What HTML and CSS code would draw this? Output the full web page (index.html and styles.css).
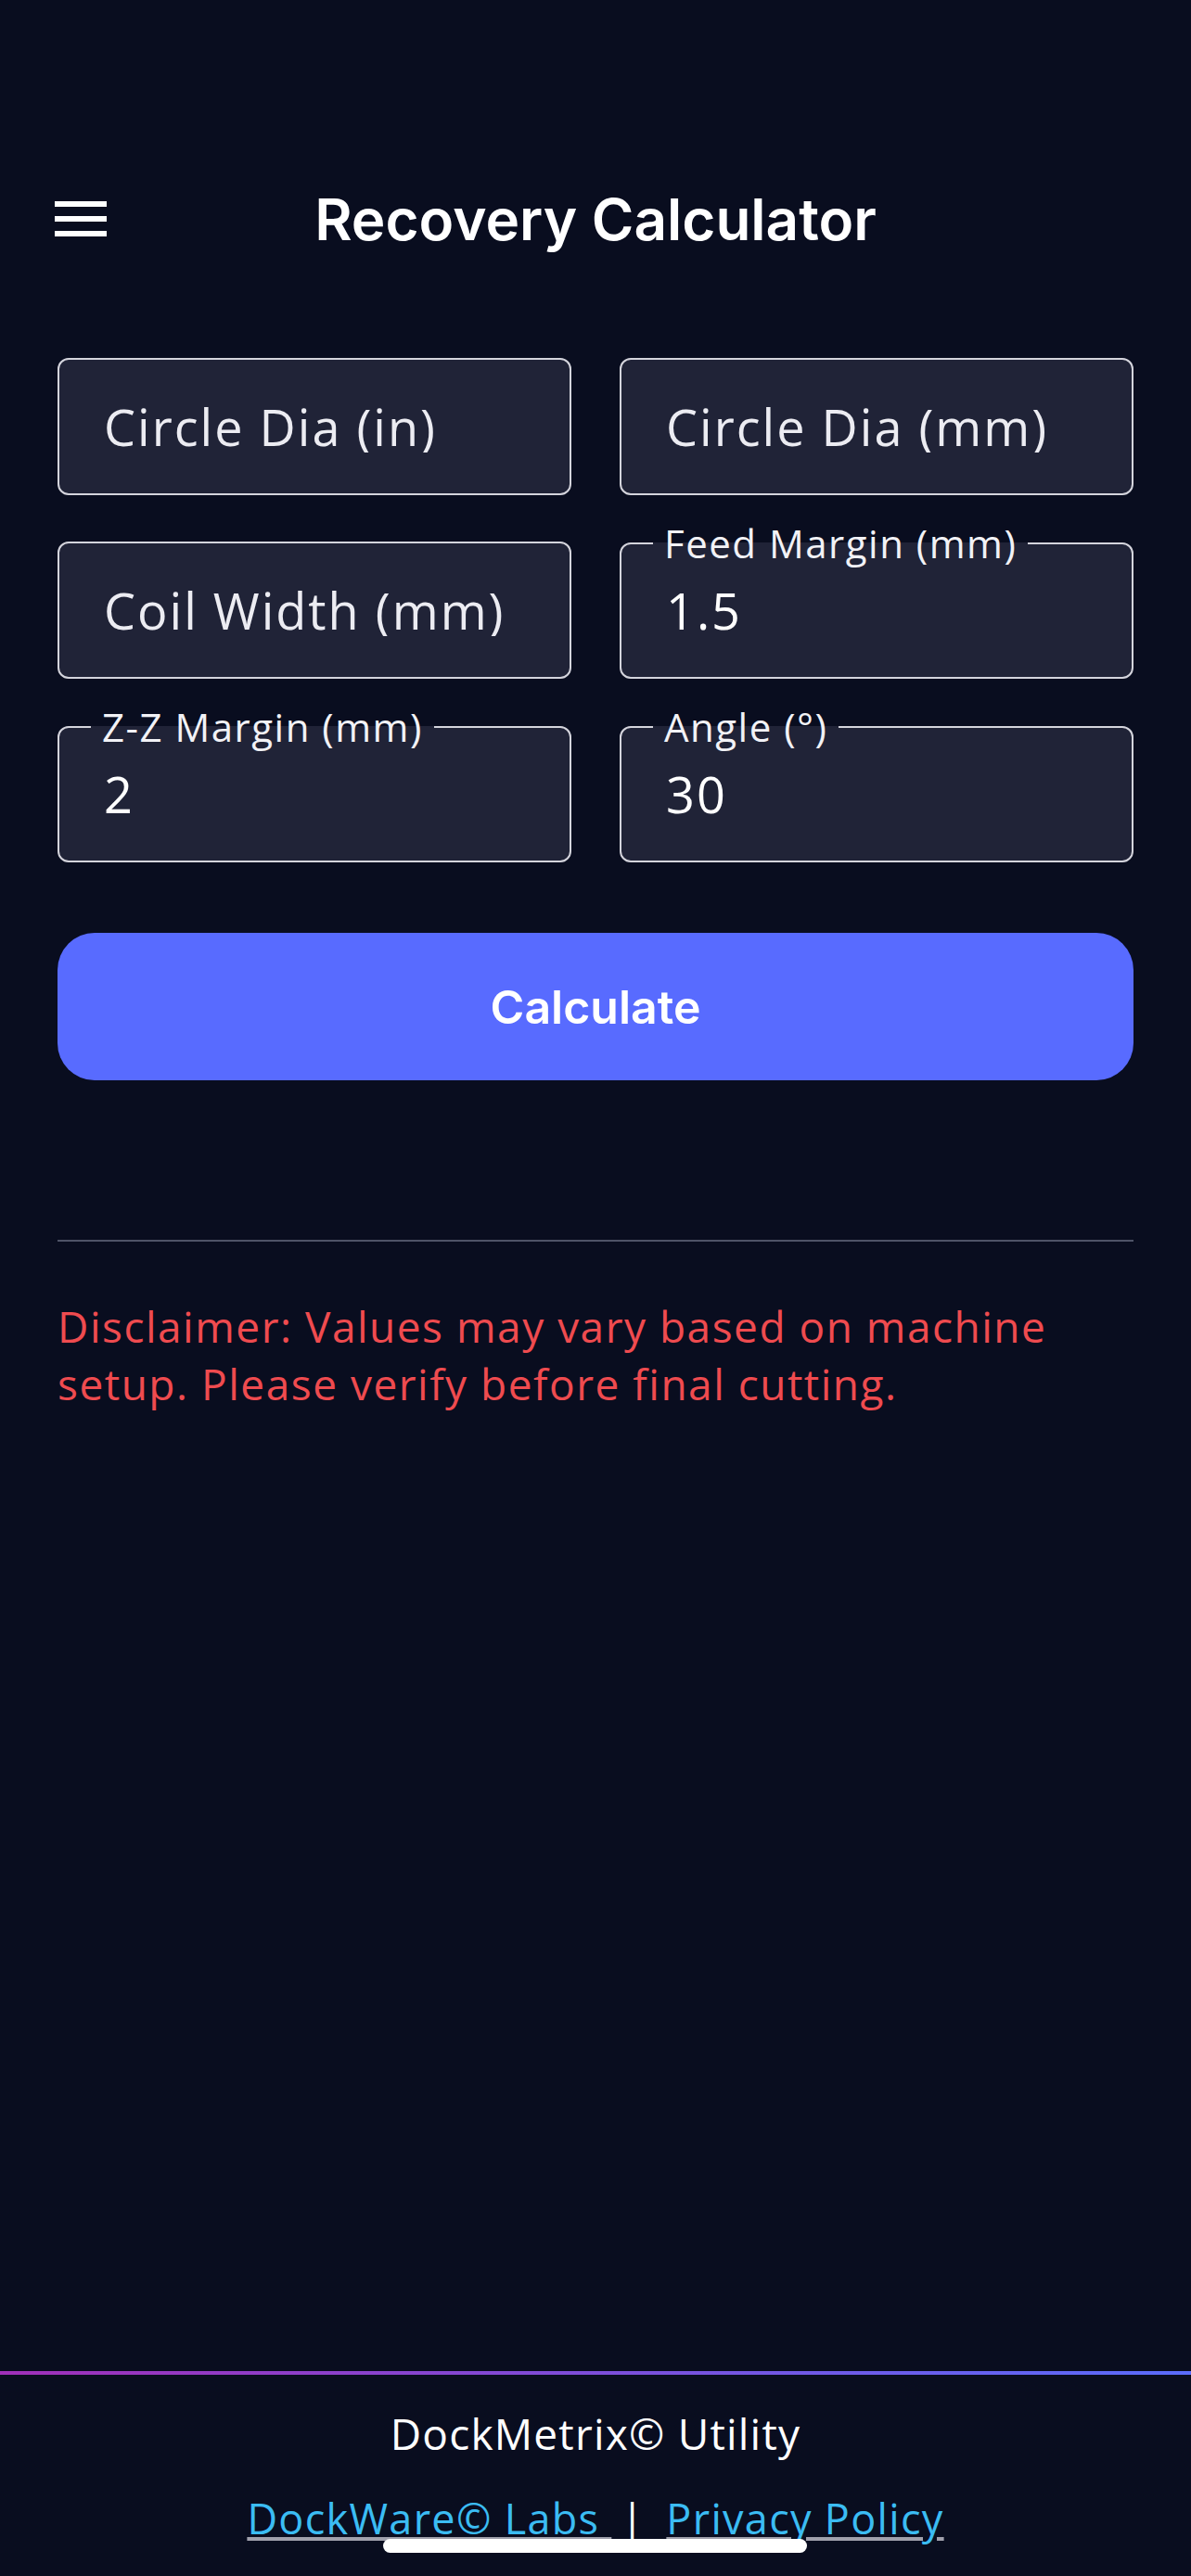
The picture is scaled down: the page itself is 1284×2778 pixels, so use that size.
FILE: index.html
```html
<!DOCTYPE html>
<html lang="en">
<head>
  <meta charset="UTF-8">
  <meta name="viewport" content="width=device-width, initial-scale=1">
  <title>Recovery Calculator</title>
<link rel="stylesheet" href="styles.css">
</head>
<body>
  <header class="topbar">
    <button class="menu" aria-label="Menu">
      <svg width="56" height="38" viewBox="0 0 56 38">
        <rect x="0" y="0" width="56" height="6" fill="#fff"/>
        <rect x="0" y="16" width="56" height="6" fill="#fff"/>
        <rect x="0" y="32" width="56" height="6" fill="#fff"/>
      </svg>
    </button>
    <h1 class="title">Recovery Calculator</h1>
    <span></span>
  </header>

  <main class="content">
    <form class="fields" onsubmit="return false">
      <fieldset class="field">
        <input type="text" placeholder="Circle Dia (in)">
      </fieldset>
      <fieldset class="field">
        <input type="text" placeholder="Circle Dia (mm)">
      </fieldset>
      <fieldset class="field">
        <input type="text" placeholder="Coil Width (mm)">
      </fieldset>
      <fieldset class="field labeled">
        <legend>Feed Margin (mm)</legend>
        <input type="text" value="1.5">
      </fieldset>
      <fieldset class="field labeled">
        <legend>Z-Z Margin (mm)</legend>
        <input type="text" value="2">
      </fieldset>
      <fieldset class="field labeled">
        <legend>Angle (°)</legend>
        <input type="text" value="30">
      </fieldset>
    </form>

    <button class="calc">Calculate</button>

    <hr class="divider">

    <p class="disclaimer">Disclaimer: Values may vary based on machine setup. Please verify before final cutting.</p>
  </main>

  <footer class="footer">
    <div class="footline"></div>
    <div class="brand">DockMetrix© Utility</div>
    <div class="links">
      <a href="#">DockWare© Labs </a>
      <span class="sep">|</span>
      <a href="#">Privacy Policy</a>
    </div>
  </footer>

  <div class="homebar"></div>
</body>
</html>
```

FILE: styles.css
```css
html {
  height: 100%;
}
body {
  margin: 0;
  min-height: 100vh;
  display: flex;
  flex-direction: column;
  background: #090d1f;
  color: #fff;
  font-family: "Open Sans", "Noto Sans", sans-serif;
}

/* header */
.topbar {
  display: grid;
  grid-template-columns: 1fr auto 1fr;
  align-items: center;
  height: 120px;
  margin-top: 176px;
  padding: 0 59px;
}
.menu {
  justify-self: start;
  background: none;
  border: none;
  padding: 0;
  display: flex;
}
.title {
  margin: 0;
  font-family: Inter, Roboto, sans-serif;
  font-weight: 600;
  font-size: 62px;
}

/* form */
.content {
  padding: 0 62px;
}
.fields {
  display: grid;
  grid-template-columns: 1fr 1fr;
  column-gap: 52px;
  row-gap: 30px;
  align-items: end;
  margin-top: 90px;
}
.field {
  margin: 0;
  min-width: 0;
  padding: 44px 48px;
  border: 2px solid #d4d4dc;
  border-radius: 12px;
  background: #202337;
}
.field.labeled {
  padding-top: 22px;
}
.field legend {
  margin-left: -14px;
  padding: 0 12px;
  font-size: 42px;
  line-height: 44px;
  letter-spacing: 1.5px;
  color: #f2f2f6;
}
.field input {
  display: block;
  width: 100%;
  height: 56px;
  padding: 0;
  border: none;
  background: transparent;
  color: #fff;
  font-family: inherit;
  font-size: 54px;
  letter-spacing: 2px;
}
.field input::placeholder {
  color: #ececf2;
}
.field input:focus {
  outline: none;
}

.calc {
  display: block;
  width: 100%;
  height: 159px;
  margin-top: 76px;
  border: none;
  border-radius: 40px;
  background: #586bff;
  color: #fff;
  font-family: Inter, Roboto, sans-serif;
  font-weight: 600;
  font-size: 50px;
}

.divider {
  margin: 172px 0 0;
  border: none;
  height: 2px;
  background: #4e5367;
}

.disclaimer {
  margin: 60px 0 0;
  color: #ef4b4f;
  font-size: 46px;
  line-height: 62px;
  letter-spacing: 1.5px;
}

/* footer */
.footer {
  margin-top: auto;
  height: 221px;
  text-align: center;
}
.footline {
  height: 4px;
  background: linear-gradient(90deg, #a02fb8 0%, #5a6cfb 100%);
}
.brand {
  margin-top: 32px;
  font-size: 46px;
  letter-spacing: 1.2px;
}
.links {
  margin-top: 30px;
  font-size: 45px;
  letter-spacing: 1.3px;
}
.links a {
  color: #3bbcf3;
  text-decoration-color: #a0a0ac;
}
.sep {
  margin: 0 10px;
}

.homebar {
  position: fixed;
  left: calc(50% - 229px);
  bottom: 25px;
  width: 457px;
  height: 15px;
  border-radius: 8px;
  background: #fff;
}
```
